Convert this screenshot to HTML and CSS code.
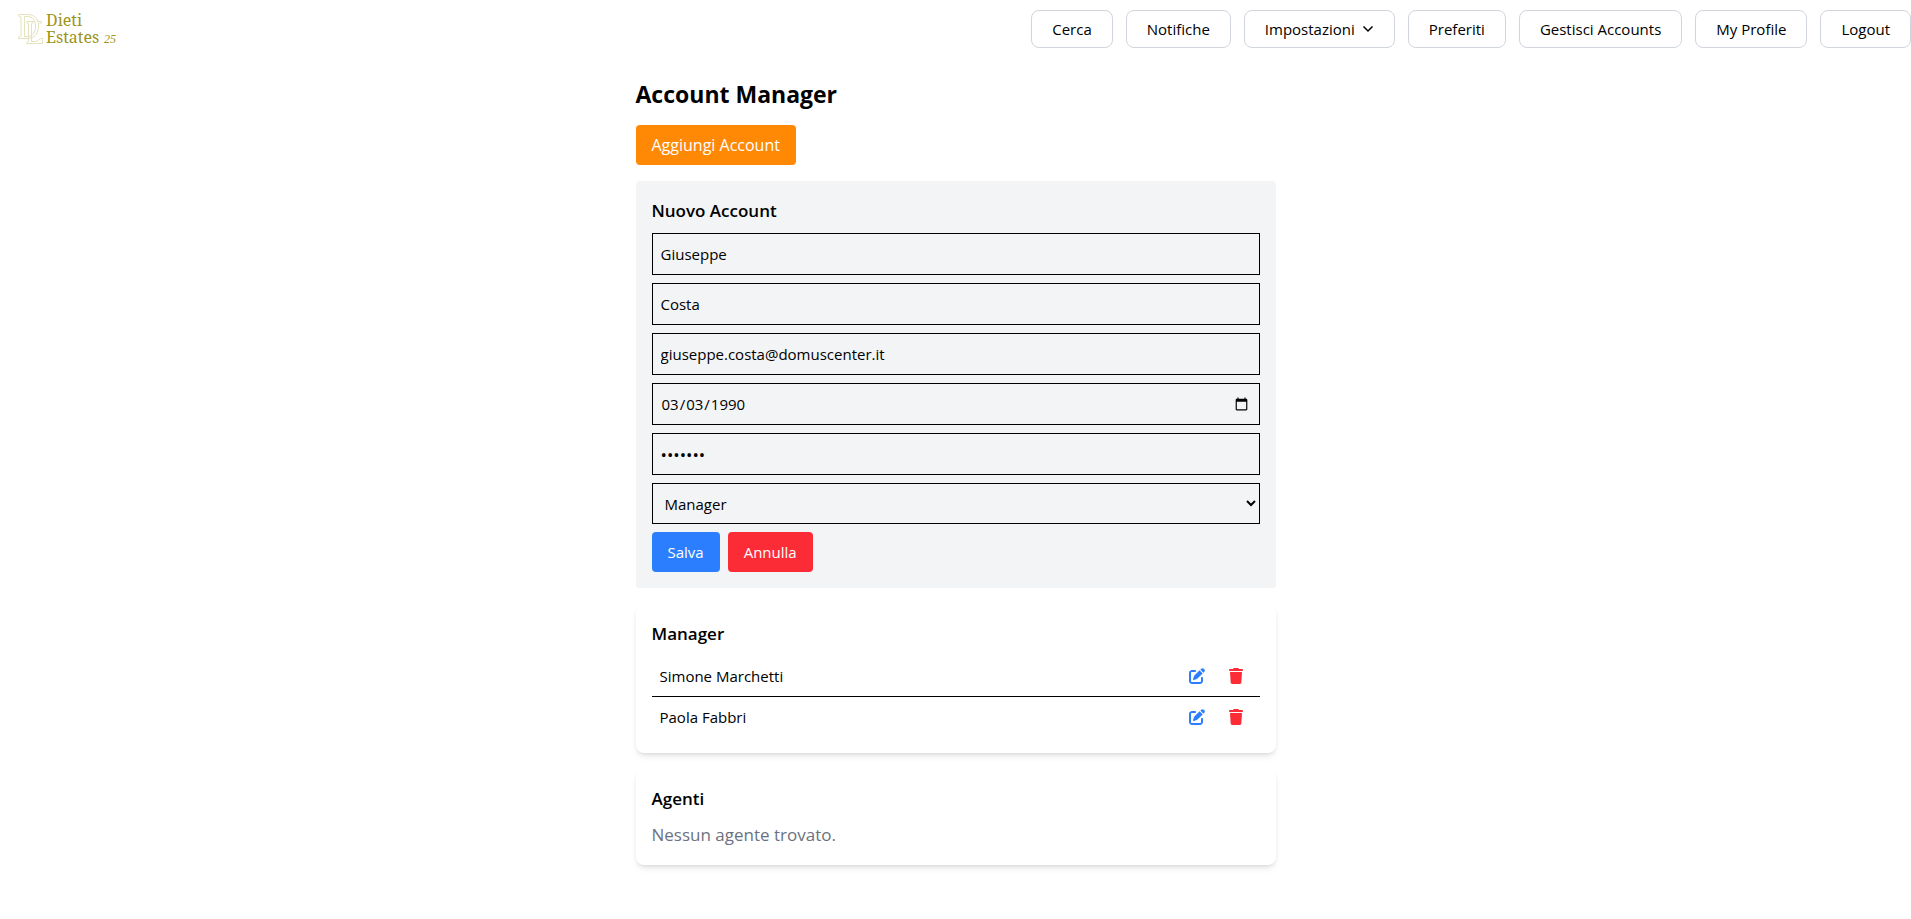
FILE: index.html
```html
<!DOCTYPE html>
<html lang="it">
<head>
<meta charset="utf-8">
<title>Dieti Estates 25 - Account Manager</title>
<link rel="stylesheet" href="styles.css">
</head>
<body>
<svg class="sprite" aria-hidden="true">
  <symbol id="edit" viewBox="0 0 512 512"><path d="M471.6 21.7c-21.9-21.9-57.3-21.9-79.2 0L362.3 51.7l97.9 97.9 30.1-30.1c21.9-21.9 21.9-57.3 0-79.2L471.6 21.7zm-299.2 220c-6.1 6.1-10.8 13.6-13.5 21.9l-29.6 88.8c-2.9 8.6-.6 18.1 5.8 24.6s15.9 8.7 24.6 5.8l88.8-29.6c8.2-2.7 15.7-7.4 21.9-13.5L437.7 172.3 339.7 74.3 172.4 241.7zM96 64C43 64 0 107 0 160V416c0 53 43 96 96 96H352c53 0 96-43 96-96V320c0-17.7-14.3-32-32-32s-32 14.3-32 32v96c0 17.7-14.3 32-32 32H96c-17.7 0-32-14.3-32-32V160c0-17.7 14.3-32 32-32h96c17.7 0 32-14.3 32-32s-14.3-32-32-32H96z"/></symbol>
  <symbol id="trash" viewBox="0 0 448 512"><path d="M135.2 17.7L128 32H32C14.3 32 0 46.3 0 64S14.3 96 32 96H416c17.7 0 32-14.3 32-32s-14.3-32-32-32H320l-7.2-14.3C307.4 6.800 296.3 0 284.2 0H163.8c-12.1 0-23.2 6.800-28.6 17.7zM416 128H32L53.2 467c1.6 25.3 22.6 45 47.9 45H346.900c25.3 0 46.3-19.7 47.9-45L416 128z"/></symbol>
</svg>
<header class="topbar">
  <a class="logo" href="#" aria-label="Dieti Estates 25">
    <svg width="104" height="38" viewBox="0 0 104 38">
      <g class="monogram">
        <path d="M2.500 4.500H11C19 4.500 22.500 9 22.500 16S19 28.500 11 28.500H2.500V27L5 26V7L2.500 6z"/>
        <path d="M8.500 6.500H11C17 6.500 19.500 10 19.500 16S17 26.500 11 26.500H8.500z"/>
        <path d="M10.500 11.500H17.500V12.500L15.500 13.500V31.500H20.500L24.500 28.500H26.500V33.500H10.500V32.500L12.500 31.500V13.500L10.500 12.500z"/>
        <path d="M21.500 11.500H25.500V13L23.500 13.500"/>
      </g>
      <g class="wordmark"><text x="30" y="16">Dieti</text><text x="30" y="33">Estates</text></g>
      <text class="year" x="88" y="33">25</text>
    </svg>
  </a>
  <nav class="nav">
    <button class="nav-btn">Cerca</button>
    <button class="nav-btn">Notifiche</button>
    <button class="nav-btn">Impostazioni <svg class="chevron" viewBox="0 0 12 12"><path d="M1.500 3.500 6 8l4.500-4.500"/></svg></button>
    <button class="nav-btn">Preferiti</button>
    <button class="nav-btn">Gestisci Accounts</button>
    <button class="nav-btn">My Profile</button>
    <button class="nav-btn">Logout</button>
  </nav>
</header>
<main class="page">
  <h1 class="page-title">Account Manager</h1>
  <button class="btn btn-add">Aggiungi Account</button>
  <form class="form">
    <h2 class="section-title">Nuovo Account</h2>
    <div class="fields">
      <input class="field" type="text" aria-label="Nome" value="Giuseppe">
      <input class="field" type="text" aria-label="Cognome" value="Costa">
      <input class="field" type="email" aria-label="Email" value="giuseppe.costa@domuscenter.it">
      <input class="field" type="date" aria-label="Data di nascita" value="1990-03-03">
      <input class="field field-password" type="password" aria-label="Password" value="manager">
      <select class="field field-select" aria-label="Ruolo"><option>Manager</option><option>Agente</option></select>
    </div>
    <div class="actions">
      <button class="btn btn-save" type="button">Salva</button>
      <button class="btn btn-cancel" type="button">Annulla</button>
    </div>
  </form>
  <section class="card">
    <h2 class="section-title">Manager</h2>
    <ul class="people">
      <li class="person"><span>Simone Marchetti</span><span class="tools"><button class="tool tool-edit" aria-label="Modifica"><svg><use href="#edit"/></svg></button><button class="tool tool-delete" aria-label="Elimina"><svg><use href="#trash"/></svg></button></span></li>
      <li class="person"><span>Paola Fabbri</span><span class="tools"><button class="tool tool-edit" aria-label="Modifica"><svg><use href="#edit"/></svg></button><button class="tool tool-delete" aria-label="Elimina"><svg><use href="#trash"/></svg></button></span></li>
    </ul>
  </section>
  <section class="card">
    <h2 class="section-title">Agenti</h2>
    <p class="empty">Nessun agente trovato.</p>
  </section>
</main>
</body>
</html>
```

FILE: styles.css
```css
*, *::before, *::after { box-sizing: border-box; margin: 0; padding: 0; }
body { font: 15px/24px "Segoe UI", "Open Sans", "Noto Sans", sans-serif; color: #000; background: #fff; }
button, input, select { font: inherit; color: inherit; }
button { cursor: pointer; border: 0; }
.sprite { display: none; }

.topbar { display: flex; justify-content: space-between; align-items: center; padding: 10px 0; }
.logo { display: block; margin-left: 16px; height: 38px; }
.logo svg { display: block; }
.monogram { fill: none; stroke: #e4e3bd; stroke-width: 1; }
.wordmark { font-family: "Noto Serif", "DejaVu Serif Condensed", "DejaVu Serif", serif; font-size: 16px; fill: #9c9318; }
.year { font-family: "Liberation Serif", serif; font-style: italic; font-size: 12px; fill: #9c9318; }

.nav { display: flex; gap: 13px; }
.nav-btn { display: flex; align-items: center; gap: 7px; height: 38px; padding: 0 20px; border: 1px solid #d1d5dc; border-radius: 8px; background: #fff; white-space: nowrap; }
.chevron { width: 12px; height: 12px; fill: none; stroke: #000; stroke-width: 1.5; }

.page { max-width: 672px; margin: 0 auto; padding: 20px 16px 16px; }
.page-title { font-size: 23px; line-height: 32px; font-weight: 700; margin-bottom: 15px; }
.btn { display: block; padding: 8px 16px; border-radius: 4px; color: #fff; }
.btn-add { font-size: 16px; background: #ff8904; margin-bottom: 16px; }
.btn-save { background: #2b7fff; }
.btn-cancel { background: #fb2c36; }

.form { padding: 16px; margin-bottom: 16px; background: #f3f4f6; border-radius: 4px; }
.section-title { font-size: 17px; line-height: 28px; font-weight: 600; margin-bottom: 8px; }
.fields { display: grid; gap: 8px; margin-bottom: 8px; }
.field { width: 100%; height: 42px; padding: 8px; border: 1px solid #000; border-radius: 0; background: transparent; }
.field-password { font-size: 17px; }
.field-select { height: 41px; }
.actions { display: flex; gap: 8px; }

.card { padding: 16px; margin-bottom: 16px; background: #fff; border-radius: 8px; box-shadow: 0 4px 6px -1px rgb(0 0 0 / 0.1), 0 2px 4px -2px rgb(0 0 0 / 0.1); }
.people { list-style: none; }
.person { display: flex; justify-content: space-between; align-items: center; padding: 8px; }
.person + .person { border-top: 1px solid #000; }
.tools { display: flex; gap: 7px; }
.tool { padding: 0 8px; background: none; }
.tool svg { display: block; width: 16px; height: 16px; fill: currentColor; }
.tool-edit { color: #2b7fff; }
.tool-delete { color: #fb2c36; }
.empty { font-size: 17px; line-height: 28px; color: #6a7282; }
```
